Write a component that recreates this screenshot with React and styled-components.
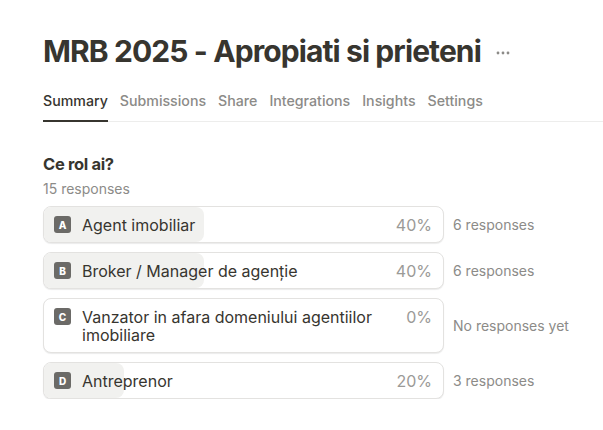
import styled, { createGlobalStyle } from "styled-components";

const GlobalStyle = createGlobalStyle`
  body {
    margin: 0;
    background: #ffffff;
    font-family: Inter, "Noto Sans", sans-serif;
    color: #37352f;
  }
`;

const tabs = ["Summary", "Submissions", "Share", "Integrations", "Insights", "Settings"];

const options = [
  { letter: "A", label: "Agent imobiliar", pct: 40, count: "6 responses" },
  { letter: "B", label: "Broker / Manager de agenție", pct: 40, count: "6 responses" },
  { letter: "C", label: "Vanzator in afara domeniului agentiilor imobiliare", pct: 0, count: "No responses yet" },
  { letter: "D", label: "Antreprenor", pct: 20, count: "3 responses" },
];

const App = () => {
  return (
    <Page>
      <GlobalStyle />
      <Header>
        <Title>MRB 2025 - Apropiati si prieteni</Title>
        <MoreButton aria-label="More">
          <svg width="14" height="4" viewBox="0 0 14 4">
            <circle cx="2" cy="2" r="1.4" fill="#8c8b88" />
            <circle cx="7" cy="2" r="1.4" fill="#8c8b88" />
            <circle cx="12" cy="2" r="1.4" fill="#8c8b88" />
          </svg>
        </MoreButton>
      </Header>

      <TabBar>
        {tabs.map((t, i) => (
          <Tab key={t} $active={i === 0}>{t}</Tab>
        ))}
      </TabBar>

      <Question>
        <QuestionTitle>Ce rol ai?</QuestionTitle>
        <ResponseCount>15 responses</ResponseCount>
        <Options>
          {options.map((o) => (
            <OptionRow key={o.letter}>
              <OptionCard>
                <Fill style={{ width: `${o.pct}%` }} />
                <Badge>{o.letter}</Badge>
                <OptionLabel>{o.label}</OptionLabel>
                <Percent>{o.pct}%</Percent>
              </OptionCard>
              <Count>{o.count}</Count>
            </OptionRow>
          ))}
        </Options>
      </Question>
    </Page>
  );
};

export default App;

const Page = styled.div`
  padding: 33px 0 0 43px;
`;

const Header = styled.div`
  display: flex;
  align-items: center;
  gap: 15px;
`;

const Title = styled.h1`
  margin: 0;
  font-size: 30px;
  line-height: 36px;
  font-weight: 700;
  letter-spacing: -0.03em;
  color: #37352f;
`;

const MoreButton = styled.div`
  display: flex;
  align-items: center;
  padding-top: 4px;
`;

const TabBar = styled.div`
  display: flex;
  gap: 12px;
  margin-top: 22px;
  border-bottom: 1px solid #ededec;
`;

const Tab = styled.div`
  font-size: 14.2px;
  font-weight: 500;
  line-height: 20px;
  padding-bottom: 9px;
  color: ${(p) => (p.$active ? "#37352f" : "#8c8b88")};
  border-bottom: 2px solid ${(p) => (p.$active ? "#37352f" : "transparent")};
  margin-bottom: -1px;
`;

const Question = styled.div`
  margin-top: 30px;
`;

const QuestionTitle = styled.h2`
  margin: 0;
  font-size: 16.5px;
  line-height: 24px;
  font-weight: 700;
  letter-spacing: -0.02em;
  color: #37352f;
`;

const ResponseCount = styled.div`
  font-size: 14px;
  line-height: 18px;
  color: #8c8b88;
  margin-top: 4px;
`;

const Options = styled.div`
  display: flex;
  flex-direction: column;
  gap: 9px;
  margin-top: 8px;
`;

const OptionRow = styled.div`
  display: flex;
  align-items: center;
  gap: 9px;
`;

const OptionCard = styled.div`
  position: relative;
  box-sizing: border-box;
  width: 401px;
  display: flex;
  align-items: flex-start;
  padding: 9px 11px 8px 10px;
  border: 1px solid #e3e2e0;
  border-radius: 8px;
  box-shadow: 0 1px 1px rgba(15, 15, 15, 0.08);
  overflow: hidden;
  background: #ffffff;
`;

const Fill = styled.div`
  position: absolute;
  left: 0;
  top: 0;
  bottom: 0;
  background: #f1f1ef;
  border-radius: 0 8px 8px 0;
`;

const Badge = styled.span`
  position: relative;
  flex-shrink: 0;
  width: 17px;
  height: 17px;
  border-radius: 3px;
  background: #6b6a67;
  color: #ffffff;
  font-size: 10px;
  font-weight: 800;
  display: flex;
  align-items: center;
  justify-content: center;
`;

const OptionLabel = styled.span`
  position: relative;
  flex: 1;
  margin-left: 11px;
  font-size: 16px;
  line-height: 18px;
  color: #37352f;
  padding-right: 20px;
`;

const Percent = styled.span`
  position: relative;
  font-size: 16px;
  line-height: 18px;
  color: #9b9a97;
`;

const Count = styled.div`
  font-size: 14px;
  color: #8c8b88;
`;
